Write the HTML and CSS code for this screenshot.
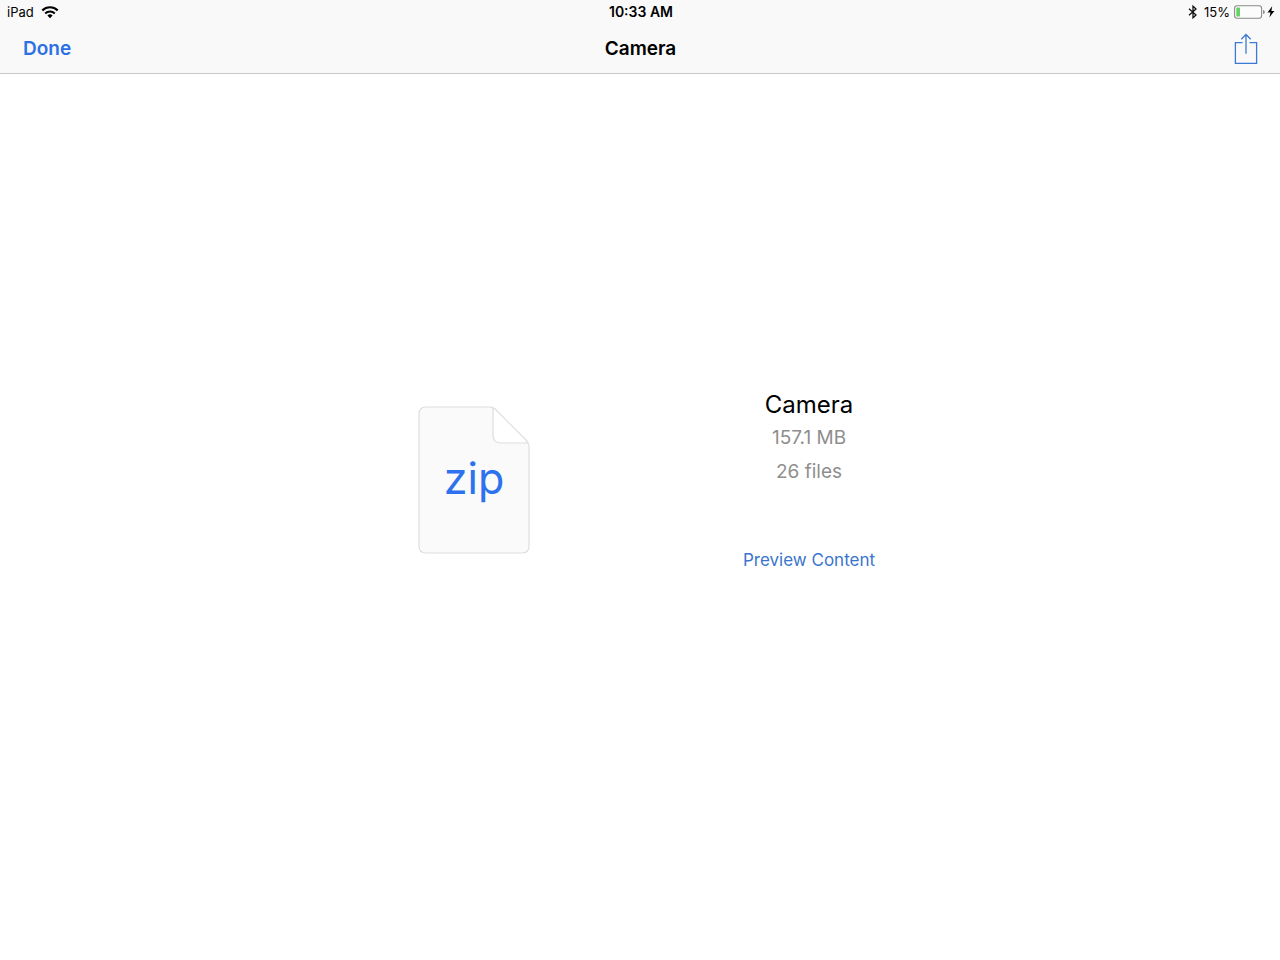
FILE: index.html
```html
<!DOCTYPE html>
<html lang="en">
<head>
<meta charset="utf-8">
<meta name="viewport" content="width=device-width, initial-scale=1">
<title>Camera</title>
<link rel="stylesheet" href="styles.css">
</head>
<body>
<header class="top">
  <div class="status">
    <div class="status-left">
      <span>iPad</span>
      <svg class="wifi" width="18" height="13" viewBox="0 0 18 13" aria-hidden="true">
        <path d="M1.3 4.4a11 11 0 0 1 15.4 0" fill="none" stroke="#000" stroke-width="2.2"/>
        <path d="M4.2 7.5a6.8 6.8 0 0 1 9.6 0" fill="none" stroke="#000" stroke-width="2"/>
        <path d="M9 12.2 6.4 9.5a3.7 3.7 0 0 1 5.2 0z"/>
      </svg>
    </div>
    <time class="clock">10:33 AM</time>
    <div class="status-right">
      <svg class="bluetooth" width="10" height="14" viewBox="0 0 10 14" aria-hidden="true">
        <path d="M1 3.8 8 10 5 12.8V1.2L8 4 1 10.2" fill="none" stroke="#111" stroke-width="1.3"/>
      </svg>
      <span>15%</span>
      <svg class="battery" width="41" height="14" viewBox="0 0 41 14" aria-hidden="true">
        <rect x=".6" y=".8" width="27" height="12.4" rx="2.4" fill="#fcfcfc" stroke="#8b8b8b" stroke-width="1.1"/>
        <rect x="2.3" y="2.5" width="3.7" height="9" rx=".5" fill="#69d267"/>
        <path d="M29.2 5q1.5.2 1.5 2t-1.5 2z" fill="#777"/>
        <path d="m38.2 1.2-4.7 6.2h3l-1.1 5 5-6.5h-3z"/>
      </svg>
    </div>
  </div>
  <nav class="bar">
    <button class="done" type="button">Done</button>
    <h1 class="title">Camera</h1>
    <button class="share" type="button" aria-label="Share">
      <svg width="24" height="32" viewBox="0 0 24 32" fill="none" stroke="#3c79d6" stroke-width="1.3" aria-hidden="true">
        <path d="M8.5 9.7H1.4v20.7h21.2V9.7h-7.1M12 20.8V1.5M7.3 6.2 12 1.5l4.7 4.7"/>
      </svg>
    </button>
  </nav>
</header>
<main class="preview">
  <div class="columns">
    <svg class="file" width="112" height="148" viewBox="0 0 112 148" role="img" aria-label="zip file">
      <path d="M8 1h64q3 0 5 2l31 31q3 3 3 7v99q0 7-7 7H8q-7 0-7-7V8q0-7 7-7z" fill="#fafafa"/>
      <path d="M75 1.8V29q0 8 8 8h27q-.7-1.600-2-3L77 3z" fill="#fff"/>
      <path d="M8 1h64q3 0 5 2l31 31q3 3 3 7v99q0 7-7 7H8q-7 0-7-7V8q0-7 7-7zM75 1.800V29q0 8 8 8h27" fill="none" stroke="#dedede" stroke-width="1.2"/>
      <text class="file-type" x="56" y="88" text-anchor="middle">zip</text>
    </svg>
    <section class="info">
      <h2 class="name">Camera</h2>
      <p class="detail">157.1 MB</p>
      <p class="detail">26 files</p>
      <button class="open" type="button">Preview Content</button>
    </section>
  </div>
</main>
</body>
</html>
```
FILE: styles.css
```css
* {
  box-sizing: border-box;
}

body {
  margin: 0;
  min-height: 100vh;
  display: flex;
  flex-direction: column;
  background: #fff;
  color: #000;
  font-family: Inter, "Liberation Sans", sans-serif;
}

button {
  border: 0;
  padding: 0;
  background: none;
  font-family: inherit;
  cursor: pointer;
}

h1,
h2,
p {
  margin: 0;
}

.top {
  background: #f9f9f9;
  border-bottom: 1px solid #c8c8c8;
}

.status,
.bar {
  display: grid;
  grid-template-columns: 1fr auto 1fr;
  align-items: center;
}

.status {
  height: 24px;
  padding: 0 5px 0 7px;
  font-size: 13px;
  line-height: 24px;
}

.status-left,
.status-right {
  display: flex;
  align-items: center;
}

.status-left {
  gap: 7px;
}

.status-right {
  justify-content: flex-end;
  gap: 4px;
}

.bluetooth {
  margin-right: 2px;
}

.clock {
  font-size: 14px;
  font-weight: 600;
}

.bar {
  height: 49px;
  padding: 0 22px 0 23px;
}

.done,
.title {
  font-size: 19px;
  line-height: 24px;
  font-weight: 600;
}

.done {
  justify-self: start;
  color: #2c70e5;
}

.share {
  justify-self: end;
}

.share svg {
  display: block;
}

.preview {
  flex: 1;
  display: flex;
  align-items: center;
  justify-content: center;
  padding: 0 0 74px 3px;
}

.columns {
  flex: 0 1 670px;
  display: grid;
  grid-template-columns: 1fr 1fr;
  align-items: center;
  justify-items: center;
}

.file-type {
  font-size: 43px;
  fill: #2c72ef;
}

.info {
  display: flex;
  flex-direction: column;
  align-items: center;
}

.name {
  font-size: 24px;
  line-height: 32px;
  font-weight: 400;
}

.detail {
  font-size: 19px;
  line-height: 34px;
  color: #8e8e8e;
}

.open {
  margin-top: 60px;
  font-size: 17px;
  line-height: 22px;
  color: #3a75cd;
}
```
